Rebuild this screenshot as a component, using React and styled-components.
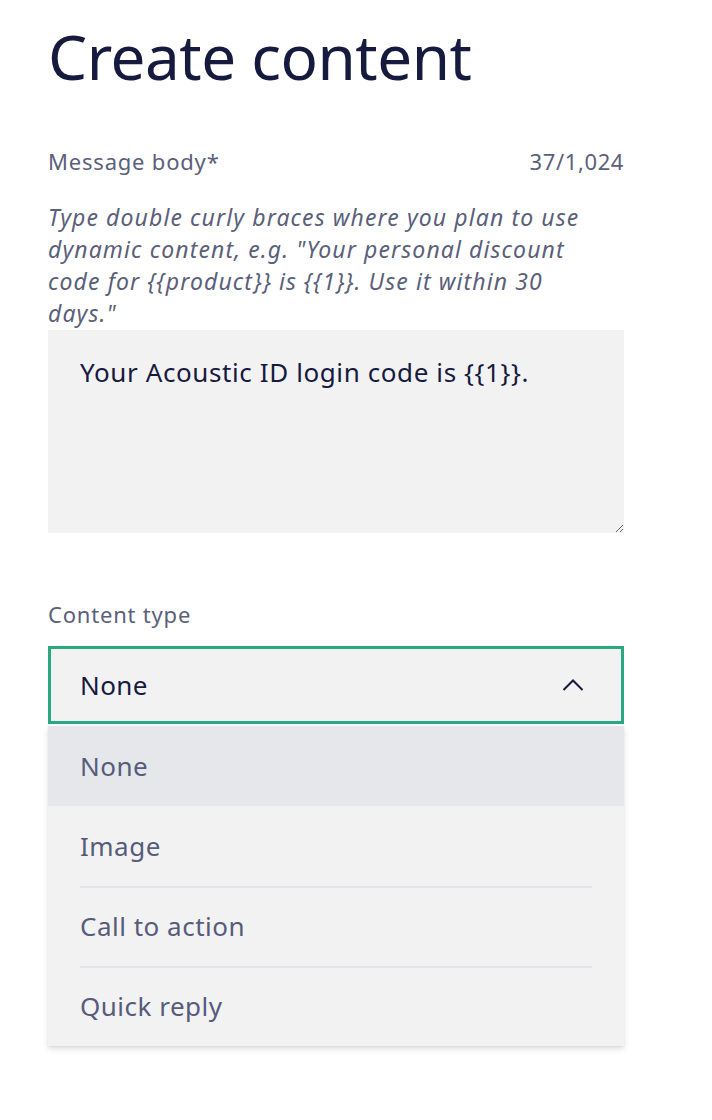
import React from 'react';
import styled, { createGlobalStyle } from 'styled-components';

// ========== GLOBAL ==========

const GlobalStyle = createGlobalStyle`
  html, body {
    margin: 0;
    padding: 0;
    background: #ffffff;
  }
  body {
    font-family: "Noto Sans", "Open Sans", sans-serif;
    -webkit-font-smoothing: antialiased;
  }
  * {
    box-sizing: border-box;
  }
`;

// ========== STYLED COMPONENTS ==========

const Page = styled.div`
  width: 712px;
  min-height: 1120px;
  padding: 19px 88px 0 48px;
`;

const Title = styled.h1`
  margin: 0 0 54px;
  font-size: 62px;
  font-weight: 400;
  line-height: 1.2;
  color: #161a3f;
  letter-spacing: -0.5px;
`;

const FieldHeader = styled.div`
  display: flex;
  justify-content: space-between;
  align-items: baseline;
  margin-bottom: ${props => props.gap || 26}px;
`;

const Label = styled.label`
  font-size: 22px;
  line-height: 28px;
  color: #5b5f7a;
  letter-spacing: 0.8px;
`;

const Counter = styled.span`
  font-size: 22px;
  line-height: 28px;
  color: #5b5f7a;
  letter-spacing: 0.6px;
`;

const Helper = styled.p`
  margin: 0 0 1px;
  max-width: 545px;
  font-size: 23px;
  line-height: 32px;
  font-style: italic;
  color: #5b5f7a;
  letter-spacing: 1.1px;
`;

const TextArea = styled.textarea`
  display: block;
  width: 100%;
  height: 203px;
  margin: 0 0 67px;
  padding: 24px 32px;
  border: none;
  outline: none;
  border-radius: 0;
  background: #f2f2f2;
  font-family: inherit;
  font-size: 26px;
  line-height: 36px;
  color: #161a3f;
  letter-spacing: 0.6px;
  resize: vertical;
`;

const SelectWrap = styled.div`
  position: relative;
`;

const SelectButton = styled.div`
  display: flex;
  align-items: center;
  justify-content: space-between;
  height: 78px;
  padding: 0 37px 0 29px;
  border: 3px solid #2aa87f;
  background: #f2f2f2;
  font-size: 26px;
  color: #161a3f;
  letter-spacing: 0.4px;
`;

const Chevron = styled.svg`
  width: 22px;
  height: 12px;
  display: block;
`;

const Menu = styled.ul`
  position: absolute;
  top: 80px;
  left: 0;
  right: 0;
  margin: 0;
  padding: 0;
  list-style: none;
  background: #f2f2f2;
  box-shadow: 0 3px 6px rgba(0, 0, 0, 0.12), 0 1px 2px rgba(0, 0, 0, 0.06);
`;

const MenuItem = styled.li`
  position: relative;
  height: 80px;
  display: flex;
  align-items: center;
  padding: 0 32px;
  font-size: 26px;
  color: #575b7b;
  letter-spacing: 0.5px;
  background: ${props => (props.active ? '#e6e7eb' : 'transparent')};

  &::before {
    content: '';
    display: ${props => (props.first ? 'none' : 'block')};
    position: absolute;
    top: 0;
    left: 32px;
    right: 32px;
    height: 2px;
    background: ${props => (props.afterActive ? '#f2f2f2' : '#e3e4e7')};
  }
`;

// ========== COMPONENT ==========

const options = ['None', 'Image', 'Call to action', 'Quick reply'];

const App = () => {
  const selected = 'None';

  return (
    <>
      <GlobalStyle />
      <Page>
        <Title>Create content</Title>

        <FieldHeader>
          <Label>Message body*</Label>
          <Counter>37/1,024</Counter>
        </FieldHeader>
        <Helper>
          Type double curly braces where you plan to use dynamic content, e.g.
          "Your personal discount code for {'{{product}}'} is {'{{1}}'}. Use it
          within 30 days."
        </Helper>
        <TextArea defaultValue="Your Acoustic ID login code is {{1}}." />

        <FieldHeader gap={18}>
          <Label>Content type</Label>
        </FieldHeader>
        <SelectWrap>
          <SelectButton>
            <span>{selected}</span>
            <Chevron viewBox="0 0 22 12" fill="none">
              <polyline
                points="1.5,11 11,1.5 20.5,11"
                stroke="#161a3f"
                strokeWidth="2"
              />
            </Chevron>
          </SelectButton>
          <Menu>
            {options.map((option, index) => (
              <MenuItem
                key={option}
                active={option === selected}
                first={index === 0}
                afterActive={index > 0 && options[index - 1] === selected}
              >
                {option}
              </MenuItem>
            ))}
          </Menu>
        </SelectWrap>
      </Page>
    </>
  );
};

export default App;
